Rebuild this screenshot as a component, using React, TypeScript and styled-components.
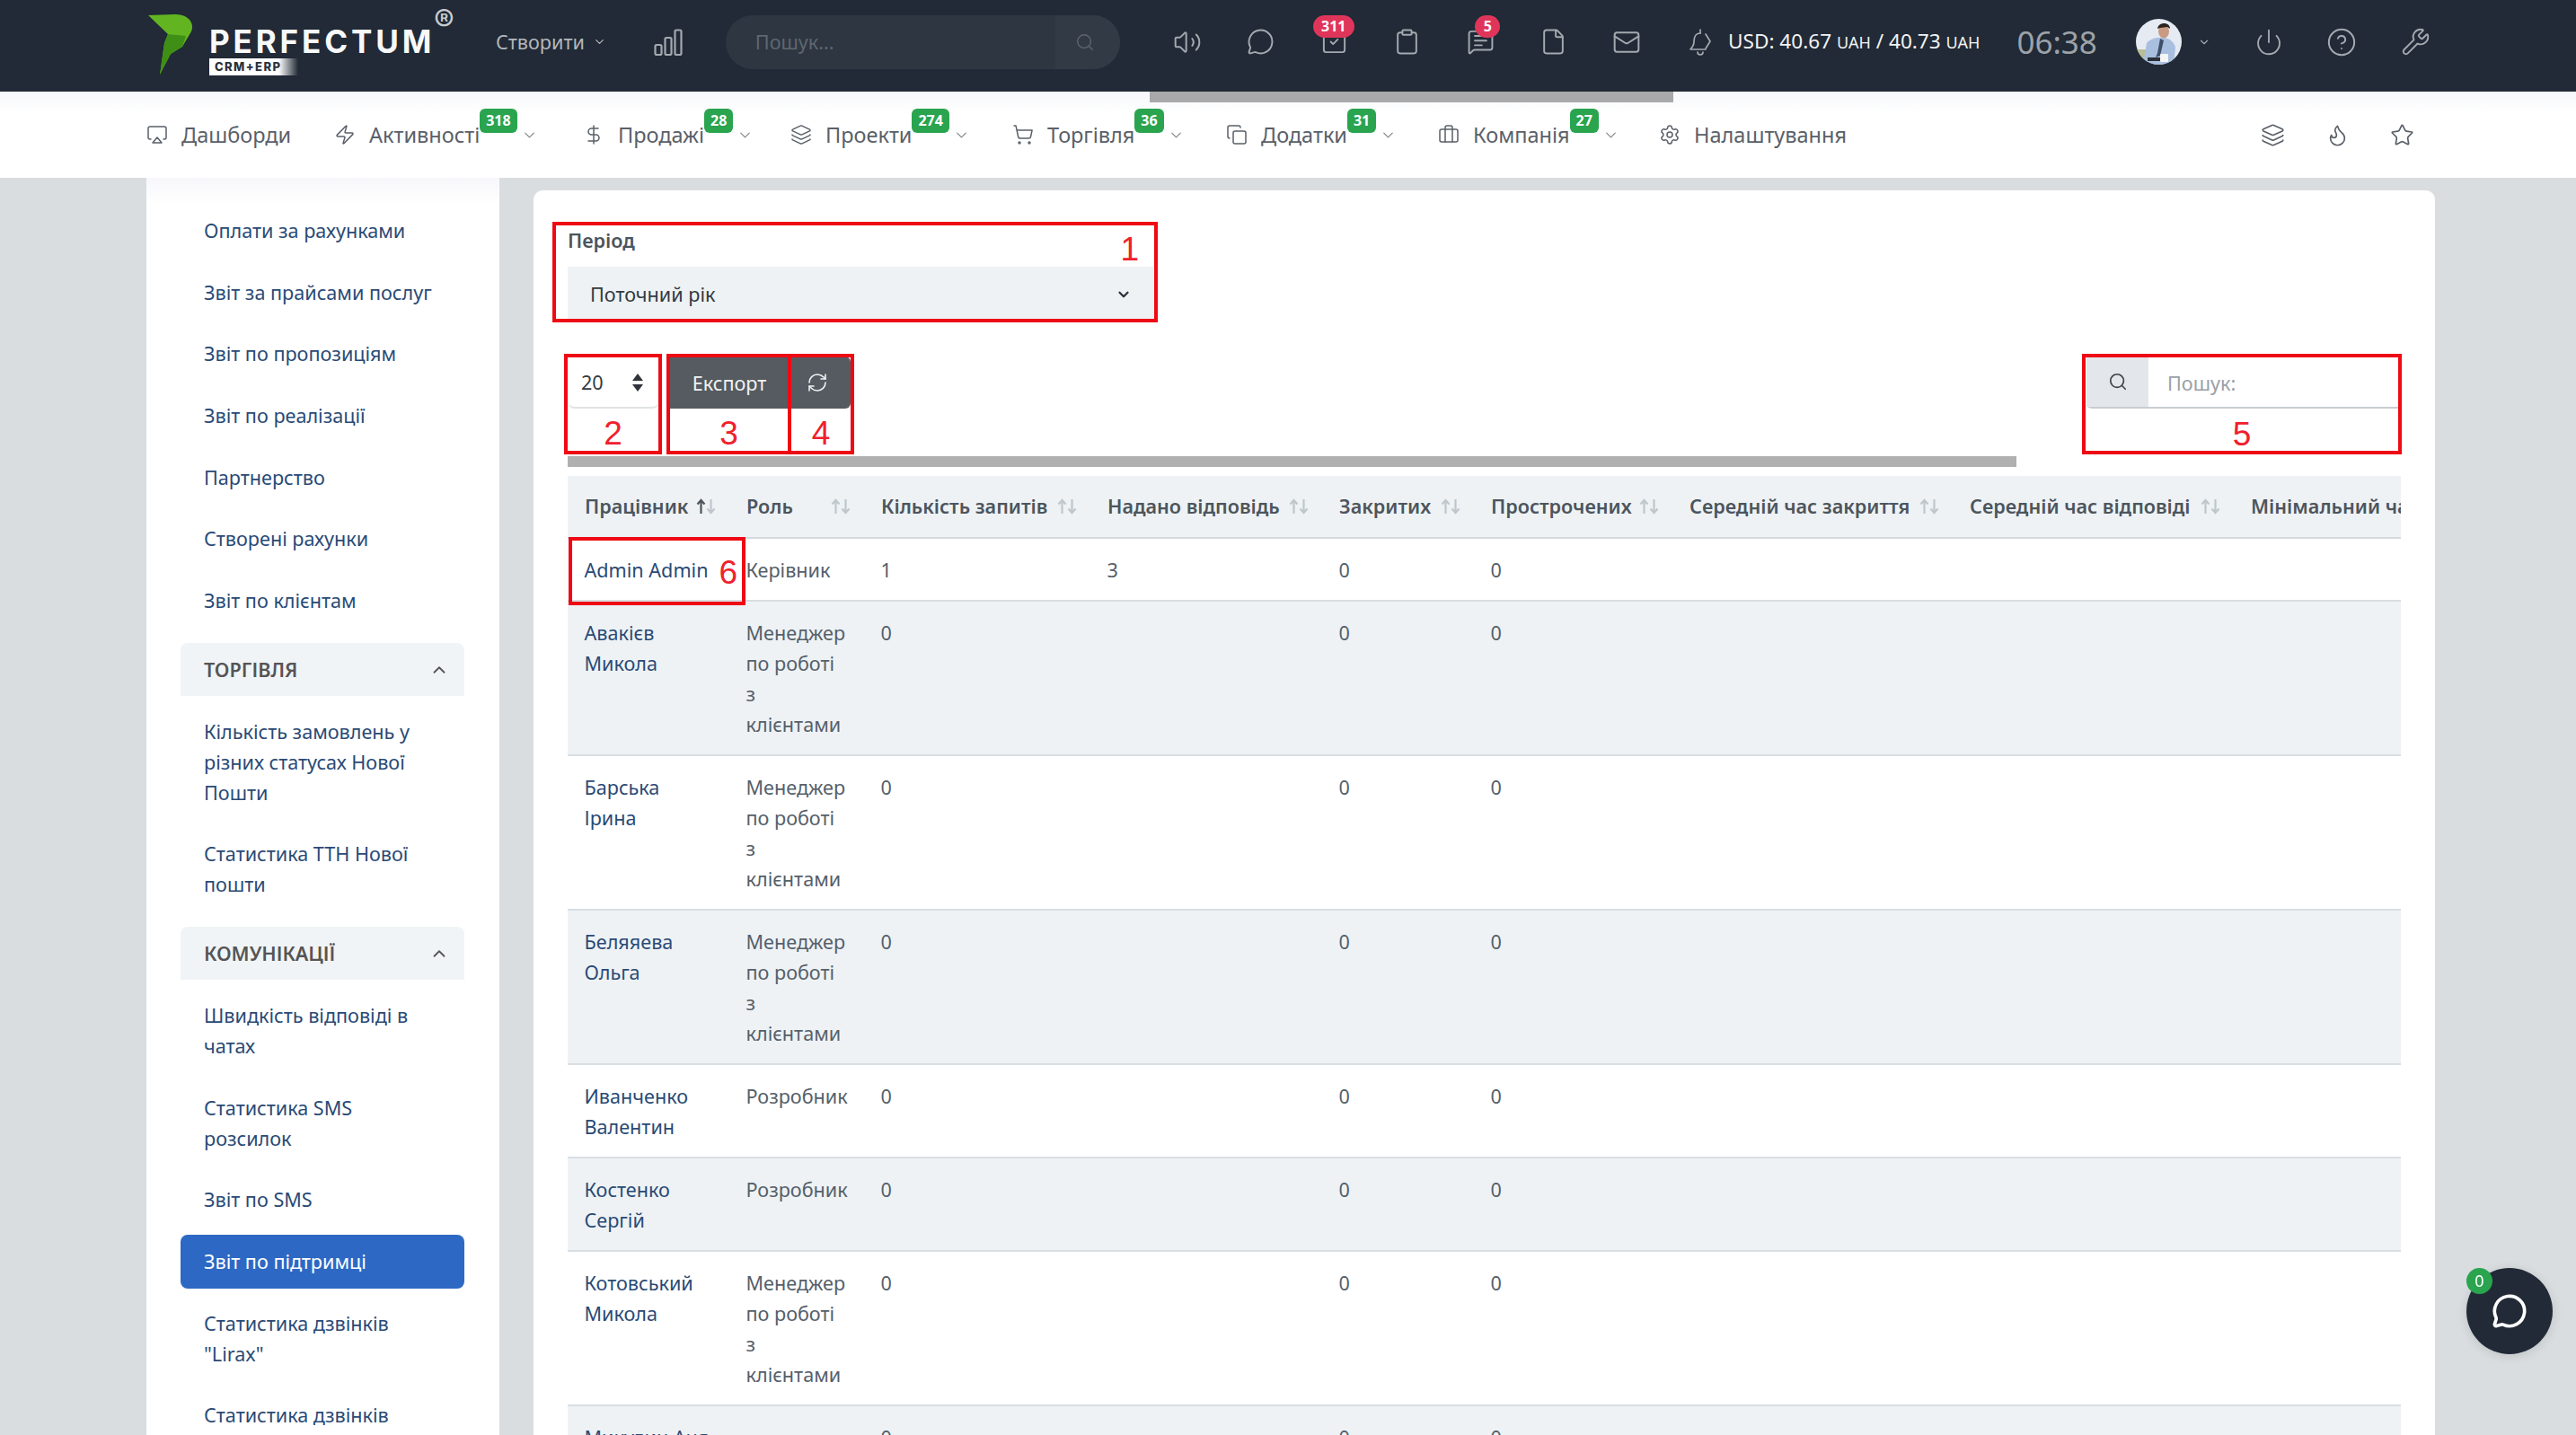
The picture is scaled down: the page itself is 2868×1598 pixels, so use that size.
import React from "react";
import styled, { createGlobalStyle } from "styled-components";
import {
  Airplay,
  Briefcase,
  ChevronDown,
  ChevronUp,
  CircleHelp,
  Clipboard,
  Copy,
  DollarSign,
  File,
  Flame,
  Layers,
  Mail,
  MessageCircle,
  MessageSquareText,
  Power,
  RefreshCw,
  Search,
  Settings,
  ShoppingCart,
  SquareCheck,
  Star,
  Volume2,
  Wrench,
  Zap,
} from "lucide-react";

const FONT = `"Noto Sans", "Open Sans", sans-serif`;

const GlobalStyle = createGlobalStyle`
  * { box-sizing: border-box; }
  html, body { margin: 0; height: 1598px; overflow: hidden; background: #d9dddf; }
  body { font-family: ${FONT}; font-size: 21.6px; line-height: 34px; color: #55606a; }
`;

const Page = styled.div`
  display: flex;
  flex-direction: column;
  height: 1598px;
  overflow: hidden;
`;

/* top bar */
const TopBar = styled.header`
  display: flex;
  align-items: center;
  flex: 0 0 102px;
  padding: 0 0 9px 165px;
  background: #212a36;
  color: #a4a9b0;
`;

const Logo = styled.div`
  display: flex;
  align-self: flex-start;
  width: 341px;
  height: 72px;
  margin-top: 15px;
  gap: 18px;
`;

const LogoWords = styled.div`
  position: relative;
  display: flex;
  flex-direction: column;
  padding-top: 13px;
`;

const LogoName = styled.span`
  font-family: "Inter", sans-serif;
  font-size: 35px;
  line-height: 36px;
  font-weight: 700;
  letter-spacing: 3.9px;
  color: #f7f8f8;
`;

const LogoReg = styled.span`
  position: absolute;
  left: 250px;
  top: -9px;
  font-family: "Inter", sans-serif;
  font-size: 34px;
  line-height: 34px;
  color: #c9ccd0;
`;

const LogoTag = styled.span`
  width: 99px;
  height: 19px;
  margin-top: 1px;
  padding-left: 6px;
  font-family: "Inter", sans-serif;
  font-size: 13px;
  line-height: 19px;
  font-weight: 800;
  letter-spacing: 1.4px;
  color: #2b313a;
  background: linear-gradient(90deg, #fff 78%, rgba(255, 255, 255, 0) 100%);
`;

const CreateButton = styled.div`
  display: flex;
  align-items: center;
  gap: 9px;
  margin-left: 46px;
  color: #b3b7bc;
`;

const Chart = styled.svg`
  width: 32px;
  height: 30px;
  margin-left: 53px;
`;

const SearchBox = styled.div`
  display: flex;
  width: 439px;
  height: 60px;
  margin-left: 48px;
  border-radius: 30px;
  overflow: hidden;
  background: #2e3641;
  color: #5f6670;
`;

const SearchText = styled.div`
  flex: 1;
  padding-left: 33px;
  line-height: 60px;
`;

const SearchEnd = styled.div`
  display: flex;
  align-items: center;
  justify-content: center;
  width: 72px;
  background: #323a45;
  padding-right: 6px;
`;

const IconRow = styled.div<{ $left: number }>`
  display: flex;
  gap: 37.6px;
  margin-left: ${(p) => p.$left}px;
`;

const IconSlot = styled.div`
  position: relative;
  display: flex;
  align-items: center;
  justify-content: center;
  width: 44px;
  height: 44px;
`;

const CountBadge = styled.span<{ $left: number }>`
  position: absolute;
  top: -8px;
  left: ${(p) => p.$left}px;
  min-width: 28px;
  height: 25px;
  padding: 0 9px;
  border-radius: 13px;
  background: #e0355b;
  color: #fff;
  font-size: 16px;
  line-height: 25px;
  font-weight: 700;
  text-align: center;
`;

const Rate = styled.div`
  margin-left: 9px;
  font-size: 22.6px;
  color: #f2f3f4;
  white-space: nowrap;

  small {
    font-size: 18px;
  }
`;

const Clock = styled.div`
  margin-left: 41px;
  font-size: 35px;
  color: #9da2a8;
`;

const Avatar = styled.svg`
  width: 51px;
  height: 51px;
  margin-left: 43px;
  border-radius: 50%;
`;

const AvatarCaret = styled.div`
  display: flex;
  margin-left: 18px;
  color: #a4a9b0;
`;

/* second row */
const NavBar = styled.nav`
  position: relative;
  z-index: 2;
  display: flex;
  align-items: center;
  flex: 0 0 96px;
  padding-left: 163px;
  background: linear-gradient(180deg, #f7f8fb 0, #fff 26px);
  color: #5a6068;
`;

const TopScroll = styled.div`
  position: absolute;
  left: 1280px;
  top: 0;
  width: 583px;
  height: 12px;
  background: #a9a9ab;
`;

const NavItem = styled.div<{ $width: number }>`
  display: flex;
  align-items: center;
  width: ${(p) => p.$width}px;
  font-size: 23.5px;
  white-space: nowrap;
`;

const NavIcon = styled.span`
  display: flex;
  flex: 0 0 39px;
`;

const NavBadge = styled.span`
  position: relative;
  top: -16px;
  height: 27px;
  padding: 0 7px;
  border-radius: 6px;
  background: #2aa44f;
  color: #fff;
  font-size: 16px;
  line-height: 27px;
  font-weight: 700;
`;

const NavCaret = styled.span`
  display: flex;
  margin-left: 4px;
  color: #7d838a;
`;

const NavRight = styled.div`
  display: flex;
  gap: 45px;
  margin-left: auto;
  padding-right: 180px;
`;

/* page body */
const Main = styled.main`
  display: flex;
  flex: 1;
  gap: 38px;
  min-height: 0;
  padding-left: 163px;
  overflow: hidden;
`;

const Sidebar = styled.aside`
  flex: 0 0 393px;
  padding: 29px 39px 0 38px;
  background: linear-gradient(180deg, #f7f7fb 0, #fff 30px);
`;

const SideLink = styled.div<{ $active?: boolean }>`
  margin-bottom: 8.7px;
  padding: 13px 26px;
  border-radius: 8px;
  background: ${(p) => (p.$active ? "#2d69c4" : "transparent")};
  color: ${(p) => (p.$active ? "#fff" : "#2a4a75")};
`;

const SideHead = styled.div`
  display: flex;
  align-items: center;
  justify-content: space-between;
  height: 59px;
  margin: 17px 0 9.5px;
  padding: 0 17px 0 26px;
  border-radius: 8px 8px 0 0;
  background: #f1f4f7;
  color: #555;
  font-weight: 600;
  text-transform: uppercase;
`;

const Card = styled.section`
  position: relative;
  flex: 0 0 2117px;
  margin-top: 14px;
  padding: 40px 37px 0 38px;
  border-radius: 10px 10px 0 0;
  background: #fff;
`;

const FieldLabel = styled.div`
  color: #4d555c;
  font-weight: 600;
  line-height: 32px;
`;

const PeriodSelect = styled.div`
  display: flex;
  align-items: center;
  justify-content: space-between;
  width: 652px;
  height: 62px;
  margin-top: 13px;
  padding: 0 24px 0 25px;
  background: #eef2f5;
  color: #333a40;
`;

const Toolbar = styled.div`
  display: flex;
  height: 58px;
  margin-top: 38px;
`;

const LengthSelect = styled.div`
  display: flex;
  align-items: center;
  justify-content: space-between;
  width: 102px;
  padding: 2px 17px 0 15px;
  border-bottom: 2px solid #dfe3e6;
  border-radius: 0 0 8px 8px;
  color: #333a40;
`;

const UpDown = styled.svg`
  width: 14px;
  height: 22px;
`;

const DarkButtons = styled.div`
  display: flex;
  margin-left: 11px;
  border-radius: 0 6px 6px 0;
  overflow: hidden;
  background: #555b60;
  color: #f1f2f3;
`;

const ExportButton = styled.div`
  width: 134px;
  text-align: center;
  line-height: 60px;
`;

const RefreshButton = styled.div`
  display: flex;
  align-items: center;
  justify-content: center;
  width: 68px;
  padding-right: 6px;
`;

const TableSearch = styled.div`
  display: flex;
  width: 351px;
  margin-left: auto;
  border-bottom: 2px solid #c9cdd2;
  border-radius: 0 0 0 6px;
`;

const SearchAddon = styled.div`
  display: flex;
  align-items: center;
  justify-content: center;
  width: 69px;
  background: #e3e6ea;
  color: #3b4248;
`;

const SearchHint = styled.div`
  padding-left: 21px;
  line-height: 60px;
  color: #9aa0a6;
`;

const ScrollThumb = styled.div`
  width: 1613px;
  height: 12px;
  margin: 53px 0 10px;
  background: #b0b0b0;
`;

const TableClip = styled.div`
  overflow: hidden;
  width: 2041px;
`;

const Grid = styled.table`
  width: 2200px;
  border-collapse: separate;
  border-spacing: 0;
  table-layout: fixed;
`;

const HeadCell = styled.th`
  height: 70px;
  padding: 0 15px 0 19px;
  background: #eef2f5;
  border-bottom: 2px solid #d5dade;
  color: #4d555c;
  font-weight: 600;
  text-align: left;
  white-space: nowrap;
`;

const HeadInner = styled.div`
  display: flex;
  align-items: center;
  justify-content: space-between;
`;

const SortGlyph = styled.svg`
  flex: 0 0 22px;
  width: 22px;
  height: 18px;
  margin-left: 6px;
`;

const Cell = styled.td<{ $striped: boolean }>`
  padding: 18px 0 16px 18.5px;
  border-bottom: 2px solid #d9dee2;
  background: ${(p) => (p.$striped ? "#eef2f5" : "#fff")};
  vertical-align: top;
`;

const NameLink = styled.span`
  display: block;
  color: #2a4a75;
`;

const TextLine = styled.span`
  display: block;
`;

/* red callouts drawn on top of the screenshot */
const Callout = styled.div<{
  $left: number;
  $top: number;
  $width: number;
  $height: number;
  $justify: string;
  $align: string;
  $pad: string;
}>`
  position: absolute;
  left: ${(p) => p.$left}px;
  top: ${(p) => p.$top}px;
  width: ${(p) => p.$width}px;
  height: ${(p) => p.$height}px;
  display: flex;
  justify-content: ${(p) => p.$justify};
  align-items: ${(p) => p.$align};
  padding: ${(p) => p.$pad};
  border: 4px solid #ee0a14;
  color: #f0202c;
  font-family: "Liberation Sans", sans-serif;
  font-size: 37px;
  line-height: 37px;
`;

const ChatFab = styled.div`
  position: fixed;
  left: 2746px;
  top: 1412px;
  display: flex;
  align-items: center;
  justify-content: center;
  width: 96px;
  height: 96px;
  border-radius: 50%;
  background: #212a36;
  box-shadow: 0 2px 12px rgba(0, 0, 0, 0.12);
  color: #fff;
`;

const FabBadge = styled.span`
  position: absolute;
  left: 0;
  top: 0;
  width: 29px;
  height: 29px;
  border-radius: 50%;
  background: #2aa44f;
  color: #fff;
  font-size: 18px;
  line-height: 29px;
  text-align: center;
`;

const navItems = [
  { label: "Дашборди", icon: Airplay, width: 209 },
  { label: "Активності", icon: Zap, badge: "318", width: 277 },
  { label: "Продажі", icon: DollarSign, badge: "28", width: 231 },
  { label: "Проекти", icon: Layers, badge: "274", width: 247 },
  { label: "Торгівля", icon: ShoppingCart, badge: "36", width: 238 },
  { label: "Додатки", icon: Copy, badge: "31", width: 236 },
  { label: "Компанія", icon: Briefcase, badge: "27", width: 246 },
  { label: "Налаштування", icon: Settings, width: 240 },
];

const sideGroups = [
  {
    links: [
      ["Оплати за рахунками"],
      ["Звіт за прайсами послуг"],
      ["Звіт по пропозиціям"],
      ["Звіт по реалізації"],
      ["Партнерство"],
      ["Створені рахунки"],
      ["Звіт по клієнтам"],
    ],
  },
  {
    title: "Торгівля",
    links: [
      ["Кількість замовлень у", "різних статусах Нової", "Пошти"],
      ["Статистика ТТН Нової", "пошти"],
    ],
  },
  {
    title: "Комунікації",
    links: [
      ["Швидкість відповіді в", "чатах"],
      ["Статистика SMS", "розсилок"],
      ["Звіт по SMS"],
      ["Звіт по підтримці"],
      ["Статистика дзвінків", '"Lirax"'],
      ["Статистика дзвінків"],
    ],
  },
];

const columns = [
  { title: "Працівник", width: 180 },
  { title: "Роль", width: 150 },
  { title: "Кількість запитів", width: 252 },
  { title: "Надано відповідь", width: 258 },
  { title: "Закритих", width: 169 },
  { title: "Прострочених", width: 221 },
  { title: "Середній час закриття", width: 312 },
  { title: "Середній час відповіді", width: 313 },
  { title: "Мінімальний час закриття", width: 345 },
];

const manager = ["Менеджер", "по роботі", "з", "клієнтами"];

const people = [
  { name: ["Admin Admin"], role: ["Керівник"], asked: "1", answered: "3" },
  { name: ["Авакієв", "Микола"], role: manager },
  { name: ["Барська", "Ірина"], role: manager },
  { name: ["Беляяева", "Ольга"], role: manager },
  { name: ["Иванченко", "Валентин"], role: ["Розробник"] },
  { name: ["Костенко", "Сергій"], role: ["Розробник"] },
  { name: ["Котовський", "Микола"], role: manager },
  { name: ["Микулин Аня"], role: [""] },
];

const callouts = [
  { n: "1", left: 21, top: 35, width: 674, height: 112, justify: "flex-end", align: "flex-start", pad: "8px 17px 0 0" },
  { n: "2", left: 34, top: 182, width: 109, height: 112, justify: "center", align: "flex-end", pad: "0 0 1px 0" },
  { n: "3", left: 148, top: 182, width: 139, height: 112, justify: "center", align: "flex-end", pad: "0 0 1px 0" },
  { n: "4", left: 283, top: 182, width: 74, height: 112, justify: "center", align: "flex-end", pad: "0 0 1px 0" },
  { n: "5", left: 1724, top: 182, width: 356, height: 112, justify: "center", align: "flex-end", pad: "0" },
  { n: "6", left: 39, top: 386, width: 197, height: 76, justify: "flex-end", align: "center", pad: "3px 5px 0 0" },
];

function SortIcon({ on }: { on: boolean }): JSX.Element {
  return (
    <SortGlyph viewBox="0 0 22 18" fill="none" strokeWidth="2.2">
      <path d="M5.5 17V2M1.5 6.5L5.5 2l4 4.5" stroke={on ? "#4d555c" : "#bfc7cc"} />
      <path d="M16.5 1v15M12.5 11.5l4 4.5 4-4.5" stroke="#bfc7cc" />
    </SortGlyph>
  );
}

export default function App(): JSX.Element {
  return (
    <Page>
      <GlobalStyle />
      <TopBar>
        <Logo>
          <svg width="50" height="69" viewBox="0 0 50 69">
            <path d="M0 2 L30 1 C44 1 52 10 48 20 L38 37 L25 45 L13 68 L18 33 L22 23 Z" fill="#62b521" />
            <path d="M22 23 L42 25 L38 37 L25 45 L13 68 L18 33 Z" fill="#3f8f17" />
          </svg>
          <LogoWords>
            <LogoName>PERFECTUM</LogoName>
            <LogoReg>®</LogoReg>
            <LogoTag>CRM+ERP</LogoTag>
          </LogoWords>
        </Logo>
        <CreateButton>
          Створити <ChevronDown size={15} strokeWidth={2} />
        </CreateButton>
        <Chart viewBox="0 0 32 30" fill="none" stroke="#a4a9b0" strokeWidth="2.2">
          <rect x="1.5" y="18" width="7" height="11" rx="1.5" />
          <rect x="12.5" y="10" width="7" height="19" rx="1.5" />
          <rect x="23.5" y="1.5" width="7" height="27.5" rx="1.5" />
        </Chart>
        <SearchBox>
          <SearchText>Пошук...</SearchText>
          <SearchEnd>
            <Search size={22} strokeWidth={1.5} />
          </SearchEnd>
        </SearchBox>
        <IconRow $left={53}>
          <IconSlot><Volume2 size={32} strokeWidth={1.5} /></IconSlot>
          <IconSlot><MessageCircle size={31} strokeWidth={1.5} /></IconSlot>
          <IconSlot>
            <SquareCheck size={31} strokeWidth={1.5} />
            <CountBadge $left={-1}>311</CountBadge>
          </IconSlot>
          <IconSlot><Clipboard size={31} strokeWidth={1.5} /></IconSlot>
          <IconSlot>
            <MessageSquareText size={31} strokeWidth={1.5} />
            <CountBadge $left={16}>5</CountBadge>
          </IconSlot>
          <IconSlot><File size={31} strokeWidth={1.5} /></IconSlot>
          <IconSlot><Mail size={32} strokeWidth={1.5} /></IconSlot>
          <IconSlot>
            <svg width="30" height="32" viewBox="0 0 30 32" fill="none" stroke="currentColor" strokeWidth="1.7" strokeLinecap="round" strokeLinejoin="round">
              <path d="M15 2v4" />
              <path d="M15 6c-5 0-7 4-7 9 0 5-2 7-4 9h17" />
              <path d="M21 7l5 8-5 8" />
              <path d="M12 27a3 3 0 0 0 6 0" />
            </svg>
          </IconSlot>
        </IconRow>
        <Rate>
          USD: 40.67 <small>UAH</small> / 40.73 <small>UAH</small>
        </Rate>
        <Clock>06:38</Clock>
        <Avatar viewBox="0 0 51 51">
          <rect width="51" height="51" fill="#e6ebf3" />
          <rect x="0" y="34" width="12" height="17" fill="#b9bd95" />
          <path d="M8 51 L12 27 C16 22 22 21 25 21 L31 21 C38 22 43 26 44 32 L42 51 Z" fill="#a9bfe0" />
          <path d="M27 22 L24 38 L22 43 L27 41 L31 24 Z" fill="#3f4f6a" />
          <ellipse cx="31" cy="14" rx="6" ry="7.5" fill="#c99b82" />
          <path d="M24 11 C25 3 38 3 38 11 L35 9 L27 10 Z" fill="#2a2320" />
          <rect x="27" y="39" width="9" height="9" rx="1" fill="#f5f5f5" />
          <rect x="13" y="43" width="14" height="4" fill="#2b2f38" />
        </Avatar>
        <AvatarCaret>
          <ChevronDown size={14} strokeWidth={2} />
        </AvatarCaret>
        <IconRow $left={43}>
          <IconSlot><Power size={32} strokeWidth={1.4} /></IconSlot>
          <IconSlot><CircleHelp size={34} strokeWidth={1.4} /></IconSlot>
          <IconSlot><Wrench size={33} strokeWidth={1.4} /></IconSlot>
        </IconRow>
      </TopBar>

      <NavBar>
        <TopScroll />
        {navItems.map((item) => (
          <NavItem key={item.label} $width={item.width}>
            <NavIcon>
              <item.icon size={24} strokeWidth={1.5} />
            </NavIcon>
            {item.label}
            {item.badge && <NavBadge>{item.badge}</NavBadge>}
            {item.badge && (
              <NavCaret>
                <ChevronDown size={19} strokeWidth={1.4} />
              </NavCaret>
            )}
          </NavItem>
        ))}
        <NavRight>
          <Layers size={27} strokeWidth={1.5} />
          <Flame size={27} strokeWidth={1.5} />
          <Star size={27} strokeWidth={1.5} />
        </NavRight>
      </NavBar>

      <Main>
        <Sidebar>
          {sideGroups.map((group) => (
            <React.Fragment key={group.title ?? "reports"}>
              {group.title && (
                <SideHead>
                  {group.title}
                  <ChevronUp size={22} strokeWidth={2} />
                </SideHead>
              )}
              {group.links.map((lines) => (
                <SideLink key={lines[0] + lines.length} $active={lines[0] === "Звіт по підтримці"}>
                  {lines.map((line) => (
                    <TextLine key={line}>{line}</TextLine>
                  ))}
                </SideLink>
              ))}
            </React.Fragment>
          ))}
        </Sidebar>

        <Card>
          <FieldLabel>Період</FieldLabel>
          <PeriodSelect>
            Поточний рік
            <ChevronDown size={18} strokeWidth={3} color="#2a3038" />
          </PeriodSelect>

          <Toolbar>
            <LengthSelect>
              20
              <UpDown viewBox="0 0 14 22" fill="#2f353b">
                <path d="M7 1 L13 9 H1 Z" />
                <path d="M7 21 L13 13 H1 Z" />
              </UpDown>
            </LengthSelect>
            <DarkButtons>
              <ExportButton>Експорт</ExportButton>
              <RefreshButton>
                <RefreshCw size={24} strokeWidth={1.6} />
              </RefreshButton>
            </DarkButtons>
            <TableSearch>
              <SearchAddon>
                <Search size={22} strokeWidth={1.8} />
              </SearchAddon>
              <SearchHint>Пошук:</SearchHint>
            </TableSearch>
          </Toolbar>

          <ScrollThumb />

          <TableClip>
            <Grid>
              <colgroup>
                {columns.map((col) => (
                  <col key={col.title} width={col.width} />
                ))}
              </colgroup>
              <thead>
                <tr>
                  {columns.map((col, i) => (
                    <HeadCell key={col.title}>
                      <HeadInner>
                        {col.title}
                        <SortIcon on={i === 0} />
                      </HeadInner>
                    </HeadCell>
                  ))}
                </tr>
              </thead>
              <tbody>
                {people.map((person, r) => (
                  <tr key={person.name.join(" ")}>
                    <Cell $striped={r % 2 === 1}>
                      {person.name.map((line) => (
                        <NameLink key={line}>{line}</NameLink>
                      ))}
                    </Cell>
                    <Cell $striped={r % 2 === 1}>
                      {person.role.map((line) => (
                        <TextLine key={line}>{line}</TextLine>
                      ))}
                    </Cell>
                    <Cell $striped={r % 2 === 1}>{person.asked ?? "0"}</Cell>
                    <Cell $striped={r % 2 === 1}>{person.answered}</Cell>
                    <Cell $striped={r % 2 === 1}>0</Cell>
                    <Cell $striped={r % 2 === 1}>0</Cell>
                    <Cell $striped={r % 2 === 1} />
                    <Cell $striped={r % 2 === 1} />
                    <Cell $striped={r % 2 === 1} />
                  </tr>
                ))}
              </tbody>
            </Grid>
          </TableClip>

          {callouts.map((c) => (
            <Callout
              key={c.n}
              $left={c.left}
              $top={c.top}
              $width={c.width}
              $height={c.height}
              $justify={c.justify}
              $align={c.align}
              $pad={c.pad}
            >
              {c.n}
            </Callout>
          ))}
        </Card>
      </Main>

      <ChatFab>
        <FabBadge>0</FabBadge>
        <MessageCircle size={40} strokeWidth={2.2} />
      </ChatFab>
    </Page>
  );
}
